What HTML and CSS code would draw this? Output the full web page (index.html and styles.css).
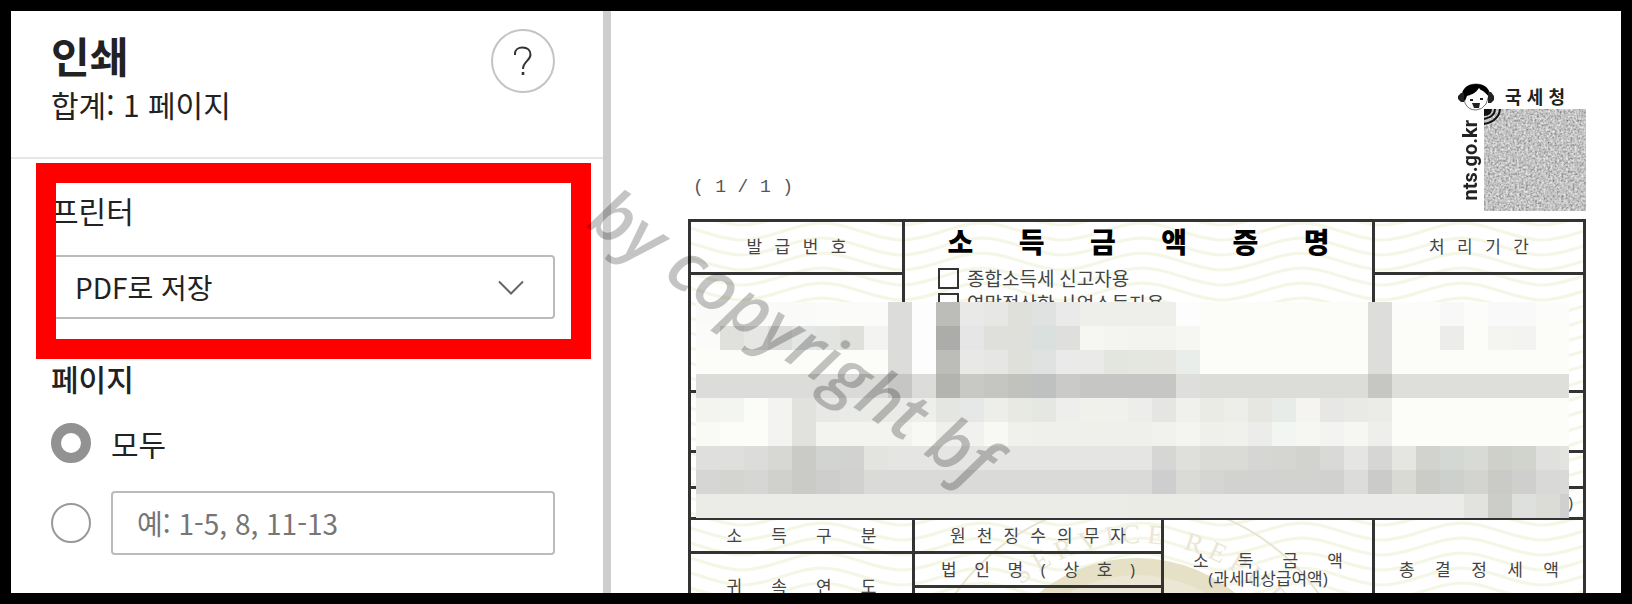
FILE: index.html
```html
<!DOCTYPE html>
<html lang="ko">
<head>
<meta charset="UTF-8" />
<meta name="viewport" content="width=device-width, initial-scale=1" />
<title>인쇄</title>
<link rel="stylesheet" href="styles.css">
</head>
<body>

<div class="screen">
  <form class="panel">
    <header class="panel-header">
      <div>
        <h1>인쇄</h1>
        <p class="total">합계: 1 페이지</p>
      </div>
      <button type="button" class="help" aria-label="도움말">
        <svg width="20" height="30" viewBox="0 0 20 30" fill="none" stroke="#333" stroke-width="2">
          <path d="M2 9V7.500C2 4 5 1.500 9.500 1.500C14.500 1.500 17.500 4.500 17.500 8.500C17.500 14.500 10 15.500 10 23" />
          <path d="M8.700 27.500h2.600" stroke-width="3" />
        </svg>
      </button>
    </header>

    <section class="printer">
      <label for="printer">프린터</label>
      <div class="select-box">
        <select id="printer" name="printer">
          <option>PDF로 저장</option>
        </select>
        <svg class="chevron" width="26" height="16" viewBox="0 0 26 16" fill="none" stroke="#666" stroke-width="2">
          <path d="M1 1.500L13 13.500L25 1.500" />
        </svg>
      </div>
    </section>

    <fieldset class="pages">
      <legend>페이지</legend>
      <div class="option">
        <input type="radio" id="all" name="pages" checked />
        <label for="all">모두</label>
      </div>
      <div class="option">
        <input type="radio" id="custom" name="pages" aria-label="페이지 범위" />
        <input type="text" class="range" name="range" aria-label="범위" placeholder="예: 1-5, 8, 11-13" />
      </div>
    </fieldset>
  </form>

  <main class="preview">
    <div class="top">
      <p class="count">( 1 / 1 )</p>
      <div class="logo">
        <svg class="face" width="36" height="28" viewBox="0 0 36 28">
          <path d="M5 12C5 5 11 1 18 1C26 1 31 6 31 12L28 21Q24 27 18 27Q10 27 7 20Z" fill="#fff" stroke="#777" />
          <path d="M4 15C3 5 10 1 18 1C26 1 33 5 32 15C30 13 28 10 25 8Q22 7 21 5C17 11 12 12 9 13L7 18Z" fill="#000" />
          <path d="M3 10h3v9H3L0 16v-3zM30 9h3l3 4v4l-3 3h-3z" fill="#222" />
          <path d="M14 20h8l-1 5h-5zM12 16h3v2h-3zM22 15h3v2h-3z" fill="#222" />
        </svg>
        <strong class="agency">국 세 청</strong>
        <span class="site">nts.go.kr</span>
        <svg class="code" viewBox="0 0 102 102">
          <filter id="grain" x="0" y="0" width="100%" height="100%">
            <feTurbulence type="fractalNoise" baseFrequency="0.45" numOctaves="2" seed="4" />
            <feColorMatrix values="0.900 0 0 0 0.090  0.900 0 0 0 0.090  0.900 0 0 0 0.090  0 0 0 0 1" />
          </filter>
          <rect width="102" height="102" filter="url(#grain)" />
          <path d="M0 0h8q0 7-8 7z" fill="#111" />
          <path d="M11 0q0 8-11 10M16 0q-1 12-16 15" fill="none" stroke="#111" stroke-width="2" />
        </svg>
      </div>
    </div>

    <div class="sheet">
      <svg class="paper" aria-hidden="true">
        <defs>
          <pattern id="waves" width="160" height="15" patternUnits="userSpaceOnUse" patternTransform="translate(-26 4)">
            <g fill="none" stroke="#f4f6e6" stroke-width="3">
              <path d="M0 -15C27 -15 53 2 80 2S133 -15 160 -15" />
              <path d="M0 0C27 0 53 17 80 17S133 0 160 0" />
              <path d="M0 -30C27 -30 53 -13 80 -13S133 -30 160 -30" />
              <path d="M0 15C27 15 53 32 80 32S133 15 160 15" />
            </g>
          </pattern>
        </defs>
        <rect width="100%" height="100%" fill="url(#waves)" />
      </svg>
      <svg class="seal" viewBox="0 0 450 450" aria-hidden="true">
        <circle cx="225" cy="225" r="223" fill="none" stroke="#e9e4cf" stroke-width="2" />
        <circle cx="225" cy="215" r="155" fill="#e6e1c6" />
        <circle cx="225" cy="215" r="138" fill="#ece7d4" />
        <path id="ring" d="M45 225A180 180 0 0 1 405 225" fill="none" />
        <text class="seal-text"><textPath href="#ring" startOffset="53%" text-anchor="middle">S E R V I C E &#160; R E P U B</textPath></text>
      </svg>

      <table class="upper">
        <colgroup><col class="w-issue"><col><col class="w-last"></colgroup>
        <tr class="r-head">
          <th><span class="spread">발 급 번 호</span></th>
          <td rowspan="2" class="title-cell">
            <h2>소 득 금 액 증 명</h2>
            <div class="kind"><input type="checkbox" id="kind1" /><label for="kind1">종합소득세 신고자용</label></div>
            <div class="kind"><input type="checkbox" id="kind2" /><label for="kind2">연말정산한 사업소득자용</label></div>
          </td>
          <th><span class="spread">처 리 기 간</span></th>
        </tr>
        <tr class="r-value"><td></td><td></td></tr>
        <tr class="r-name"><td colspan="3"></td></tr>
        <tr class="r-line"><td colspan="3"></td></tr>
        <tr class="r-unit"><td colspan="3">)</td></tr>
      </table>

      <table class="lower">
        <colgroup><col class="w-kind"><col><col class="w-income"><col class="w-last"></colgroup>
        <tr>
          <th><span class="spread wide">소 득 구 분</span></th>
          <th><span class="spread payer">원 천 징 수 의 무 자</span></th>
          <th rowspan="3"><span class="spread wide">소 득 금 액</span><span class="note">(과세대상급여액)</span></th>
          <th rowspan="3"><span class="spread tax">총 결 정 세 액</span></th>
        </tr>
        <tr>
          <th rowspan="2"><span class="spread wide">귀 속 연 도</span></th>
          <th><span class="spread corp">법 인 명 ( 상 호 )</span></th>
        </tr>
        <tr><td></td></tr>
      </table>

      <div class="mosaic" id="mosaic"></div>
    </div>
  </main>

  <div class="watermark">by copyright bf</div>
</div>

<script>
  // one string per row, one colour per block; "*n" repeats a colour n times
  const rows = [
    'fafbf8*5 fbfcf9*3 dcdcda fdfdfd bcbdb8 e9eae8 e7e8e6 e0e0db dfe2e1 e9eae9 eeefeb*4 fdfdfd fcfdf9*7 dddedb fcfcfa*2 f8f8f8 fcfcfa f9f9f9*2 fcfcfa*2',
    'fbfcf9 e0e1dd e6e7e5 dcdcda e3e6e4 e2e4e2 dfe0dc f3f4f1 dcdcda fdfdfd acadab e5e6e5 dfe0db*2 dae0dd dfdfdd f6f7f3 f4f5f1 f3f4f0*2 f6f7f3 fcfdf9*7 dddedb fcfdf9*2 ececea fcfdf9 f4f4f1 f3f3f1 fcfdf9*2',
    'fcfdf9*8 dcdcda fdfdfd bcbdb8 e8e9e7 e6e7e5 dfe0da dfe2e1 e9eae9 eaebe8 e3e5df e4e6e0 e5e6e0 eaeeeb fcfdf9*7 dddedb fcfdf9*8',
    'dcdcda*5 dadbd8*3 c6c6c5 dcdcda b3b4af c8c9c4 c5c6c1 c1c1bd bfc0c0 cacac8 c6c7c5*3 c6c6c4 dedfdd dcddd9*7 c6c7c2 dedfdb*8',
    'f3f4ef f3f5f1 fbfcf8 f3f3f1 e1e2de e8e9e6 e9ebe9 eaebe7 eaebe8 eeefec e4e6e2 e5e8e6 edeeea e8e9e3 e5e7e2 eeefed f0f1eb f0f1ed edeeeb e5e5e3 f0f1ed eaebe5 edeee9 e6e7e1 e8ece9 f5f4f0 e7e7e5 e9eae6 ebece8 fcfdf9*8',
    'f9faf6 fcfdf9*2 f3f3f2 e1e2de f3f4f0 f3f4ef*3 f8f9f5 efefed f1f2f0 f8f9f5 f0f1ed efefec*5 f1f2ee f4f5f0 efefeb f0f1ec ececeb f3f5f2 f6f7f2 f3f3f1 f6f7f3 eeefec fcfdf9*8',
    'dfdfdd dfe0dd dcdcda d7d8d3 cacbc6 d2d4d2 d2d3d0 e3e3e0 e5e5e3*11 d6d6d4 dfe0dc dadbd6 dadbd7 d6d6d4 d5d5d2 d2d3ce d9d9d7 e5e5e4 d6d6d4 e5e6e1 d2d3ce d4d8d5 d8dad5 cfd0ca d1d3cd e0e0df e3e4e0',
    'd6d6d4 d4d4d1 d6d6d4 d0d1cc cacac7 cecfcd d1d1cf dadad8*12 cecece dadbd6 d5d5d4 d2d2d1*4 d1d1cf dcdcdb cbcbca dadad5 cbccc8 cdd0cd d3d4cf cacbc6 cfcfcd d9d9d8*2',
    'ebece8*18 ebebe6*3 ebebea*11 e2e3df cccdc8 dde0dd dbdcd5 d0d0d0'
  ];

  const mosaic = document.getElementById('mosaic');

  rows.forEach(function(row) {
    row.split(' ').forEach(function(part) {
      const [color, times] = part.split('*');
      for (let i = 0; i < (times || 1); i++) {
        const block = document.createElement('i');
        block.style.backgroundColor = '#' + color;
        mosaic.appendChild(block);
      }
    });
  });
</script>

</body>
</html>
```
FILE: styles.css
```css
* {
  box-sizing: border-box;
}
body {
  margin: 0;
  font-family: "Open Sans", "Noto Sans CJK KR", sans-serif;
  color: #222;
}
h1, h2, p {
  margin: 0;
}
.screen {
  position: relative;
  display: flex;
  height: 100vh;
  border: 11px solid #000;
  background-color: #fff;
  overflow: hidden;
}

/* print settings */
.panel {
  flex: 0 0 592px;
  font-family: "Noto Sans CJK KR", sans-serif;
  font-size: 30px;
  line-height: 38px;
}
.panel-header {
  display: flex;
  justify-content: space-between;
  align-items: flex-start;
  height: 148px;
  padding: 16px 48px 0 40px;
  border-bottom: 2px solid #e6e6e6;
}
h1 {
  font-size: 42px;
  line-height: 56px;
}
.total {
  line-height: 42px;
}
.help {
  display: flex;
  align-items: center;
  justify-content: center;
  width: 64px;
  height: 64px;
  margin-top: 2px;
  padding: 0;
  border: 2px solid #c4c4c4;
  border-radius: 50%;
  background-color: #fff;
}
.printer {
  position: relative;
  height: 200px;
  padding: 32px 48px 0 40px;
}
.printer label {
  display: block;
  margin-bottom: 26px;
}
/* red marker frame round the printer choice */
.printer::after {
  content: "";
  position: absolute;
  top: 4px;
  right: 12px;
  bottom: 0;
  left: 25px;
  border: 20px solid #f00;
  pointer-events: none;
}
.select-box {
  position: relative;
}
select,
.range {
  width: 100%;
  height: 64px;
  border: 2px solid #bbb;
  border-radius: 4px;
  background-color: #fff;
  color: #222;
  font: inherit;
  font-size: 28px;
}
select {
  appearance: none;
  padding: 0 22px;
}
.chevron {
  position: absolute;
  top: 25px;
  right: 31px;
  pointer-events: none;
}
.pages {
  margin: 0;
  padding: 0 48px 0 40px;
  border: 0;
}
.pages legend {
  padding: 0;
  font-weight: 500;
}
.option {
  display: flex;
  align-items: center;
  gap: 20px;
  height: 64px;
  margin-bottom: 16px;
}
.pages legend + .option {
  margin-top: 14px;
}
.option input[type="radio"] {
  appearance: none;
  flex: none;
  width: 40px;
  height: 40px;
  margin: 0;
  border: 2px solid #999;
  border-radius: 50%;
}
.option input[type="radio"]:checked {
  border: 10px solid #929292;
}
.range {
  padding: 0 24px;
}
.range::placeholder {
  color: #767676;
}

/* document preview */
.preview {
  flex: 1;
  min-width: 0;
  padding: 72px 35px 0 77px;
  border-left: 8px solid #cecece;
  overflow: hidden;
}
.top {
  display: flex;
  justify-content: space-between;
  align-items: flex-start;
  height: 136px;
}
.count {
  width: 100px;
  margin: 92px 0 0 5px;
  font-family: "Liberation Mono", monospace;
  font-size: 18px;
  line-height: 24px;
  color: #555;
  text-align-last: justify;
}
.logo {
  display: grid;
  grid-template-columns: 26px 102px;
  grid-template-rows: 26px 102px;
}
.agency {
  justify-self: center;
  width: 60px;
  font-size: 18px;
  line-height: 28px;
  text-align-last: justify;
}
.site {
  writing-mode: vertical-rl;
  transform: rotate(180deg);
  align-self: center;
  width: 24px;
  font-family: Roboto, sans-serif;
  font-size: 20px;
  font-weight: bold;
  line-height: 24px;
}
.code {
  width: 102px;
  height: 102px;
}
.sheet {
  position: relative;
  font-size: 17px;
  line-height: 18px;
}
.paper {
  position: absolute;
  width: 100%;
  height: 100%;
}
.seal {
  position: absolute;
  top: 279px;
  left: 50%;
  width: 450px;
  margin-left: -225px;
}
.seal-text {
  font-family: "Liberation Serif", serif;
  font-size: 27px;
  fill: #ebe6d5;
}
table {
  position: relative;
  width: 100%;
  border-collapse: collapse;
  table-layout: fixed;
}
th, td {
  padding: 0;
  border: 3px solid #333;
  font-weight: normal;
  color: #444;
}
.w-issue { width: 214px; }
.w-kind { width: 224px; }
.w-income { width: 211px; }
.w-last { width: 211px; }
.r-head { height: 53px; }
.r-value { height: 118px; }
.r-name { height: 60px; }
.r-line { height: 36px; }
.r-unit { height: 31px; }
.r-unit td {
  padding-right: 10px;
  text-align: right;
}
.lower {
  margin-top: -3px;
}
.lower tr {
  height: 34px;
}
.spread {
  display: block;
  width: 100px;
  margin: 0 auto;
  text-align-last: justify;
}
.spread.wide { width: 150px; }
.spread.payer { width: 176px; }
.spread.corp { width: 194px; }
.spread.tax { width: 160px; }
.note {
  display: block;
  text-align: center;
}
.title-cell {
  vertical-align: top;
}
h2 {
  width: 382px;
  margin: 1px auto 5px;
  font-size: 28px;
  font-weight: 900;
  line-height: 38px;
  color: #000;
  text-align-last: justify;
}
.kind {
  display: flex;
  align-items: center;
  gap: 8px;
  height: 25px;
  padding-left: 33px;
  font-size: 19px;
}
.kind input {
  appearance: none;
  width: 21px;
  height: 21px;
  margin: 0;
  border: 2px solid #333;
}
.mosaic {
  position: absolute;
  top: 83px;
  right: 17px;
  left: 8px;
  display: grid;
  grid-template-columns: repeat(36, 24fr) 9fr;
  grid-auto-rows: 24px;
}
.watermark {
  position: absolute;
  top: 140px;
  left: 564px;
  transform: rotate(34deg);
  transform-origin: 0 100%;
  font-family: "Open Sans", sans-serif;
  font-size: 69px;
  font-style: italic;
  font-weight: 600;
  line-height: 90px;
  white-space: nowrap;
  color: rgba(0, 0, 0, 0.23);
}
```
